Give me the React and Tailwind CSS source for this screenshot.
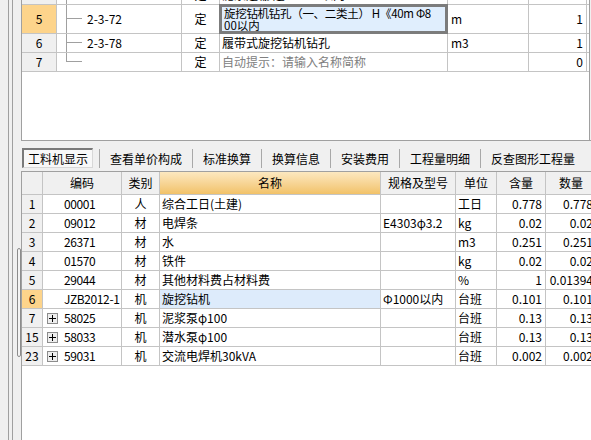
import React from 'react';

const line = 'border-[#c4c4c4]';

function TreeMark({ last }) {
  return (
    <div className="ml-[9px] w-[16px] self-stretch flex flex-col shrink-0">
      <div className="h-1/2 border-l border-b border-[#a0a0a0]" />
      <div className={last ? 'h-1/2' : 'h-1/2 border-l border-[#a0a0a0]'} />
    </div>
  );
}

function PlusBox() {
  return (
    <div className="w-[11px] h-[11px] border border-[#8c8c8c] bg-[#eeeeee] flex items-center justify-center shrink-0">
      <svg width="7" height="7" viewBox="0 0 7 7">
        <path d="M0 3.5H7M3.5 0V7" stroke="#000" strokeWidth="1" />
      </svg>
    </div>
  );
}

const topRows = [
  { no: '4', code: '2-3-71', type: '定', name: '泥浆运输 运距5km以内', unit: 'm3', qty: '1', h: 'h-[19px]' },
  { no: '5', code: '2-3-72', type: '定', name: 'edit', unit: 'm', qty: '1', h: 'h-[29px]', sel: true },
  { no: '6', code: '2-3-78', type: '定', name: '履带式旋挖钻机钻孔', unit: 'm3', qty: '1', h: 'h-[19px]' },
  { no: '7', code: '', type: '定', name: '自动提示：请输入名称简称', unit: '', qty: '0', h: 'h-[19px]', hint: true, last: true },
];

const items = [
  { no: '1', code: '00001', cat: '人', name: '综合工日(土建)', spec: '', unit: '工日', a: '0.778', b: '0.778' },
  { no: '2', code: '09012', cat: '材', name: '电焊条', spec: 'E4303φ3.2', unit: 'kg', a: '0.02', b: '0.02' },
  { no: '3', code: '26371', cat: '材', name: '水', spec: '', unit: 'm3', a: '0.251', b: '0.251' },
  { no: '4', code: '01570', cat: '材', name: '铁件', spec: '', unit: 'kg', a: '0.02', b: '0.02' },
  { no: '5', code: '29044', cat: '材', name: '其他材料费占材料费', spec: '', unit: '%', a: '1', b: '0.01394' },
  { no: '6', code: 'JZB2012-1', cat: '机', name: '旋挖钻机', spec: 'Φ1000以内', unit: '台班', a: '0.101', b: '0.101', sel: true },
  { no: '7', code: '58025', cat: '机', name: '泥浆泵φ100', spec: '', unit: '台班', a: '0.13', b: '0.13', plus: true },
  { no: '15', code: '58033', cat: '机', name: '潜水泵φ100', spec: '', unit: '台班', a: '0.13', b: '0.13', plus: true },
  { no: '23', code: '59031', cat: '机', name: '交流电焊机30kVA', spec: '', unit: '台班', a: '0.002', b: '0.002', plus: true },
];

const tabs = ['查看单价构成', '标准换算', '换算信息', '安装费用', '工程量明细', '反查图形工程量'];

export default function App() {
  return (
    <div className="w-[591px] h-[440px] overflow-hidden flex bg-[#f0f0f0] text-black text-[12px] leading-[14px] whitespace-nowrap font-['Noto_Sans_CJK_SC',sans-serif]">
      {/* left splitter strip */}
      <div className="w-[21px] h-full flex shrink-0">
        <div className="w-[8px]" />
        <div className="w-px bg-[#a0a0a0]" />
        <div className="w-[3px]" />
        <div className="w-px bg-[#a0a0a0]" />
        <div className="w-[4px]" />
        <div className="w-[4px] flex flex-col">
          <div className="h-[248px]" />
          <div className="h-[109px] border border-[#8c8c8c] rounded-[2px] bg-[#f4f4f4]" />
        </div>
      </div>

      <div className="flex-1 flex flex-col overflow-hidden">
        {/* top grid */}
        <div className="h-[141px] shrink-0 border-l border-b border-[#a0a0a0] bg-white overflow-hidden flex">
          <div className="flex flex-col w-[567px] shrink-0 -mt-[14px]">
            {topRows.map((r) => (
              <div key={r.no} className={`${r.h} flex border-b ${line} shrink-0`}>
                <div className={`w-[35px] shrink-0 border-r ${line} flex items-center justify-center ${r.sel ? 'bg-[#fdd48b]' : 'bg-[#f0f0f0]'}`}>
                  {r.no}
                </div>
                <div className={`w-[125px] shrink-0 border-r ${line} flex items-stretch`}>
                  <TreeMark last={r.last} />
                  <span className="ml-[5px] self-center">{r.code}</span>
                </div>
                <div className={`w-[38px] shrink-0 border-r ${line} flex items-center justify-center`}>{r.type}</div>
                {r.name === 'edit' ? (
                  <div className="w-[229px] shrink-0 -ml-px -mt-px h-[30px] border-[3px] border-[#7c7c7c] bg-[#e0eefd] pl-[2px] text-[11.5px] leading-[12px] overflow-hidden flex flex-col">
                    <span className="tracking-[-0.3px]">旋挖钻机钻孔（一、二类土） H《40m Φ8</span>
                    <span>00以内</span>
                  </div>
                ) : (
                  <div className={`w-[228px] shrink-0 border-r ${line} flex items-center pl-[2px] overflow-hidden ${r.hint ? 'text-[#808080]' : ''}`}>
                    {r.name}
                  </div>
                )}
                <div className={`w-[81px] shrink-0 border-r ${line} flex items-center pl-[3px]`}>{r.unit}</div>
                <div className={`w-[58px] shrink-0 border-r ${line} flex items-center justify-end pr-[3px]`}>{r.qty}</div>
              </div>
            ))}
          </div>
          <div className="flex-1 border-l border-[#a0a0a0] bg-[#f0f0f0]" />
        </div>

        {/* tab bar */}
        <div className="h-[30px] shrink-0 flex items-end pb-[3px] pl-[1px]">
          <div className="w-[71px] h-[20px] flex items-center justify-center border-t-2 border-l-2 border-r border-b border-t-[#7a7a7a] border-l-[#7a7a7a] border-r-[#d8d8d8] border-b-[#d8d8d8] bg-[#f8f8f8]">
            工料机显示
          </div>
          <div className="w-[6px]" />
          {tabs.map((t) => (
            <div key={t} className="flex items-center h-[20px]">
              <div className="w-px h-[19px] bg-[#a8a8a8]" />
              <div className="px-[10px] pt-[1px]">{t}</div>
            </div>
          ))}
        </div>

        {/* bottom grid */}
        <div className="flex-1 bg-white border-l border-t border-[#a0a0a0] overflow-hidden flex flex-col">
          <div className={`h-[23px] shrink-0 flex border-b ${line} bg-[#f0f0f0]`}>
            <div className={`w-[21px] shrink-0 border-r ${line}`} />
            <div className={`w-[79px] shrink-0 border-r ${line} flex items-center justify-center`}>编码</div>
            <div className={`w-[38px] shrink-0 border-r ${line} flex items-center justify-center`}>类别</div>
            <div className={`w-[221px] shrink-0 border-r ${line} flex items-center justify-center bg-linear-to-b from-[#fce8c0] to-[#f2c268]`}>名称</div>
            <div className={`w-[75px] shrink-0 border-r ${line} flex items-center justify-center`}>规格及型号</div>
            <div className={`w-[41px] shrink-0 border-r ${line} flex items-center justify-center`}>单位</div>
            <div className={`w-[49px] shrink-0 border-r ${line} flex items-center justify-center`}>含量</div>
            <div className={`w-[51px] shrink-0 border-r ${line} flex items-center justify-center`}>数量</div>
          </div>
          {items.map((r) => (
            <div key={r.no} className={`h-[19px] shrink-0 flex border-b ${line}`}>
              <div className={`w-[21px] shrink-0 border-r ${line} flex items-center justify-center ${r.sel ? 'bg-[#fdd48b]' : 'bg-[#f0f0f0]'}`}>
                {r.no}
              </div>
              <div className={`w-[79px] shrink-0 border-r ${line} flex items-center overflow-hidden ${r.plus ? 'pl-[4px]' : 'pl-[21px]'}`}>
                {r.plus && <PlusBox />}
                <span className={`tracking-[-0.4px] ${r.plus ? 'ml-[6px]' : ''}`}>{r.code}</span>
              </div>
              <div className={`w-[38px] shrink-0 border-r ${line} flex items-center justify-center`}>{r.cat}</div>
              <div className={`w-[221px] shrink-0 border-r ${line} flex items-center pl-[2px] ${r.sel ? 'bg-[#ddebfb]' : ''}`}>{r.name}</div>
              <div className={`w-[75px] shrink-0 border-r ${line} flex items-center pl-[2px] overflow-hidden`}>{r.spec}</div>
              <div className={`w-[41px] shrink-0 border-r ${line} flex items-center pl-[2px]`}>{r.unit}</div>
              <div className={`w-[49px] shrink-0 border-r ${line} flex items-center justify-end pr-[3px]`}>{r.a}</div>
              <div className={`w-[51px] shrink-0 border-r ${line} flex items-center justify-end pr-[3px]`}>{r.b}</div>
            </div>
          ))}
        </div>
      </div>
    </div>
  );
}
